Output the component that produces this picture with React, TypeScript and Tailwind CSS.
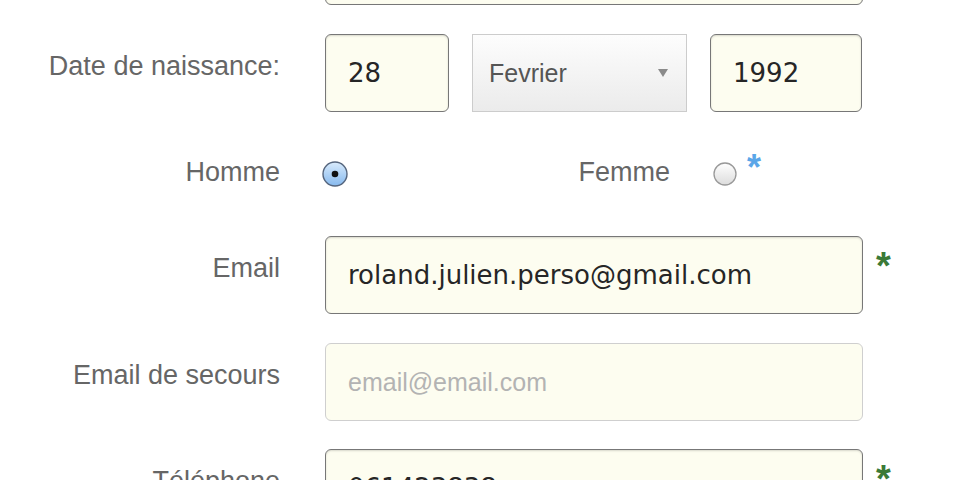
const labelCls =
  "w-[280px] shrink-0 text-right text-[27px] leading-[30px] text-[#666] font-['Liberation_Sans',Arial,sans-serif]";

const boxDark =
  "h-[78px] rounded-[6px] border border-[#777] bg-[#fdfdf0] shadow-[inset_0_1px_2px_rgba(0,0,0,0.15)]";

function Field({
  value,
  placeholder,
  dark = true,
  className = "",
}: {
  value?: string;
  placeholder?: string;
  dark?: boolean;
  className?: string;
}) {
  return (
    <div
      className={`flex items-center pl-[22px] ${
        dark
          ? boxDark
          : "h-[78px] rounded-[6px] border border-[#cfcfcf] bg-[#fdfdf0]"
      } ${className}`}
    >
      {value ? (
        <span className="text-[26px] leading-[30px] text-[#262626] font-['DejaVu_Sans',Verdana,sans-serif]">
          {value}
        </span>
      ) : (
        <span className="text-[25px] leading-[30px] text-[#b3b3b3] font-['Liberation_Sans',Arial,sans-serif]">
          {placeholder}
        </span>
      )}
    </div>
  );
}

function Star({ color }: { color: string }) {
  return (
    <span
      className={`ml-[13px] -mt-[18px] text-[38px] leading-[30px] font-bold font-['Liberation_Sans',Arial,sans-serif] ${color}`}
    >
      *
    </span>
  );
}

function Radio({ checked }: { checked?: boolean }) {
  return (
    <svg width="26" height="26" viewBox="0 0 26 26">
      <defs>
        <linearGradient id="rOn" x1="0" y1="0" x2="0" y2="1">
          <stop offset="0" stopColor="#d9ebfc" />
          <stop offset="1" stopColor="#86b9ee" />
        </linearGradient>
        <linearGradient id="rOff" x1="0" y1="0" x2="0" y2="1">
          <stop offset="0" stopColor="#ffffff" />
          <stop offset="1" stopColor="#dcdcdc" />
        </linearGradient>
      </defs>
      {checked ? (
        <>
          <circle cx="13" cy="13" r="12" fill="url(#rOn)" stroke="#55657d" strokeWidth="1.4" />
          <circle cx="13" cy="13" r="3.3" fill="#111" />
        </>
      ) : (
        <circle cx="13" cy="13" r="11" fill="url(#rOff)" stroke="#999" strokeWidth="1.3" />
      )}
    </svg>
  );
}

export default function App() {
  return (
    <div className="h-[480px] w-[960px] overflow-hidden bg-white">
      <div className="-mt-[73px] flex flex-col gap-[29px]">
        <div className="flex">
          <div className={labelCls} />
          <Field value=" " className="ml-[45px] w-[538px]" />
        </div>

        <div className="flex items-start">
          <div className={`${labelCls} pt-[17px]`}>Date de naissance:</div>
          <div className="ml-[45px] flex gap-[23px]">
            <Field value="28" className="w-[124px]" />
            <div className="flex h-[78px] w-[215px] items-center justify-between border border-[#cccccc] bg-gradient-to-b from-[#fdfdfd] to-[#ebebeb] pl-[16px] pr-[18px]">
              <span className="text-[25px] leading-[30px] text-[#555] font-['Liberation_Sans',Arial,sans-serif]">
                Fevrier
              </span>
              <svg width="10" height="8" viewBox="0 0 10 8">
                <path d="M0 0 L10 0 L5 8 Z" fill="#8a8a8a" />
              </svg>
            </div>
            <Field value="1992" className="w-[152px]" />
          </div>
        </div>

        <div className="flex h-[66px] items-center">
          <div className={`${labelCls} -mt-[4px]`}>Homme</div>
          <div className="ml-[42px]">
            <Radio checked />
          </div>
          <div className="w-[322px] shrink-0 text-right text-[27px] leading-[30px] text-[#666] font-['Liberation_Sans',Arial,sans-serif] -mt-[4px]">
            Femme
          </div>
          <div className="ml-[42px]">
            <Radio />
          </div>
          <span className="ml-[9px] -mt-[12px] text-[36px] leading-[30px] font-bold text-[#5aa6e8] font-['Liberation_Sans',Arial,sans-serif]">
            *
          </span>
        </div>

        <div className="flex items-start">
          <div className={`${labelCls} pt-[17px]`}>Email</div>
          <div className="ml-[45px] flex items-center">
            <Field value="roland.julien.perso@gmail.com" className="w-[538px]" />
            <Star color="text-[#3b7a37]" />
          </div>
        </div>

        <div className="flex items-start">
          <div className={`${labelCls} pt-[17px]`}>Email de secours</div>
          <div className="ml-[45px] flex items-center">
            <Field placeholder="email@email.com" dark={false} className="w-[538px]" />
          </div>
        </div>

        <div className="-mt-[1px] flex items-start">
          <div className={`${labelCls} pt-[17px]`}>Téléphone</div>
          <div className="ml-[45px] flex items-center">
            <Field value="061423838" className="w-[538px]" />
            <Star color="text-[#3b7a37]" />
          </div>
        </div>
      </div>
    </div>
  );
}
